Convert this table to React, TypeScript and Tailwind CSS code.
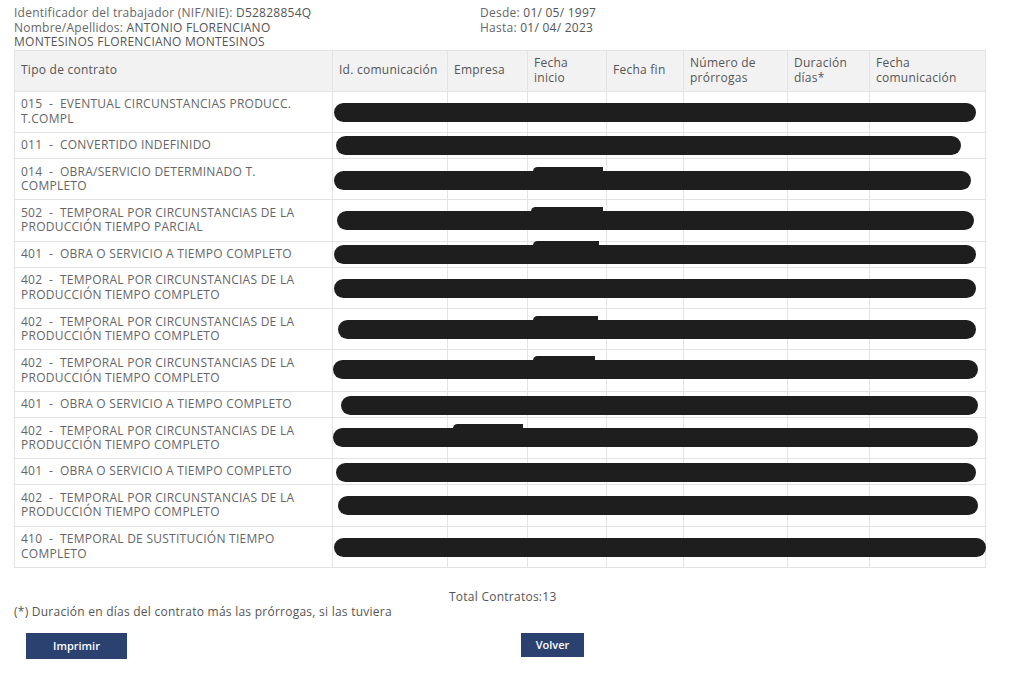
import React from 'react';

interface Contrato {
  tipo: string[];
  bar: [number, number, number];
  bump?: [number, number];
}

// bar: [left, right, offsetY] in px relative to the Id. comunicación cell (x=332)
const contratos: Contrato[] = [
  { tipo: ['015  -  EVENTUAL CIRCUNSTANCIAS PRODUCC.', 'T.COMPL'], bar: [1, 643, 0] },
  { tipo: ['011  -  CONVERTIDO INDEFINIDO'], bar: [3, 628, 0] },
  { tipo: ['014  -  OBRA/SERVICIO DETERMINADO T.', 'COMPLETO'], bar: [1, 638, 1], bump: [200, 270] },
  { tipo: ['502  -  TEMPORAL POR CIRCUNSTANCIAS DE LA', 'PRODUCCIÓN TIEMPO PARCIAL'], bar: [4, 641, 0], bump: [198, 270] },
  { tipo: ['401  -  OBRA O SERVICIO A TIEMPO COMPLETO'], bar: [1, 643, 0], bump: [200, 266] },
  { tipo: ['402  -  TEMPORAL POR CIRCUNSTANCIAS DE LA', 'PRODUCCIÓN TIEMPO COMPLETO'], bar: [1, 643, 0] },
  { tipo: ['402  -  TEMPORAL POR CIRCUNSTANCIAS DE LA', 'PRODUCCIÓN TIEMPO COMPLETO'], bar: [5, 643, 0], bump: [200, 265] },
  { tipo: ['402  -  TEMPORAL POR CIRCUNSTANCIAS DE LA', 'PRODUCCIÓN TIEMPO COMPLETO'], bar: [0, 645, -2], bump: [200, 262] },
  { tipo: ['401  -  OBRA O SERVICIO A TIEMPO COMPLETO'], bar: [8, 645, 1] },
  { tipo: ['402  -  TEMPORAL POR CIRCUNSTANCIAS DE LA', 'PRODUCCIÓN TIEMPO COMPLETO'], bar: [0, 645, -1], bump: [120, 190] },
  { tipo: ['401  -  OBRA O SERVICIO A TIEMPO COMPLETO'], bar: [3, 643, 0] },
  { tipo: ['402  -  TEMPORAL POR CIRCUNSTANCIAS DE LA', 'PRODUCCIÓN TIEMPO COMPLETO'], bar: [5, 645, 0] },
  { tipo: ['410  -  TEMPORAL DE SUSTITUCIÓN TIEMPO', 'COMPLETO'], bar: [1, 653, 0] },
];

const columnas = [
  { label: ['Tipo de contrato'], w: 'w-[318px]' },
  { label: ['Id. comunicación'], w: 'w-[115px]' },
  { label: ['Empresa'], w: 'w-[80px]' },
  { label: ['Fecha', 'inicio'], w: 'w-[79px]' },
  { label: ['Fecha fin'], w: 'w-[77px]' },
  { label: ['Número de', 'prórrogas'], w: 'w-[104px]' },
  { label: ['Duración', 'días*'], w: 'w-[82px]' },
  { label: ['Fecha', 'comunicación'], w: 'w-[116px]' },
];

const Redaction: React.FC<{ c: Contrato }> = ({ c }) => {
  const [l, r, dy] = c.bar;
  return (
    <>
      {c.bump && (
        <div
          className="absolute h-[9px] rounded-l-full rounded-r-[6px] bg-[#1e1e1e]"
          style={{ left: c.bump[0], width: c.bump[1] - c.bump[0], top: `calc(50% - 13px + ${dy}px)` }}
        />
      )}
      <div
        className="absolute h-[19px] rounded-full bg-[#1e1e1e]"
        style={{ left: l, width: r - l, top: `calc(50% - 9px + ${dy}px)` }}
      />
    </>
  );
};

export default function App() {
  return (
    <div className="w-[1024px] h-[676px] bg-white font-['Open_Sans',sans-serif] text-[12px] leading-[14.5px] tracking-[0.25px] text-[#666]">
      <div className="px-[14px] pt-[6px] flex">
        <div className="w-[466px]">
          <p>Identificador del trabajador (NIF/NIE): <span className="text-[#555]">D52828854Q</span></p>
          <p>Nombre/Apellidos: <span className="text-[#555]">ANTONIO FLORENCIANO</span></p>
          <p className="text-[#555]">MONTESINOS FLORENCIANO MONTESINOS</p>
        </div>
        <div>
          <p>Desde: <span className="text-[#555]">01/ 05/ 1997</span></p>
          <p>Hasta: <span className="text-[#555]">01/ 04/ 2023</span></p>
        </div>
      </div>

      <table className="ml-[14px] border-collapse table-fixed w-[971px]">
        <thead>
          <tr className="h-[41px] bg-[#f2f2f2]">
            {columnas.map((col, i) => (
              <th key={i} className={`${col.w} border border-[#e3e3e3] px-[6px] text-left font-normal text-[#555] align-middle`}>
                {col.label.map((t, j) => (
                  <div key={j}>{t}</div>
                ))}
              </th>
            ))}
          </tr>
        </thead>
        <tbody>
          {contratos.map((c, i) => (
            <tr key={i} className={c.tipo.length > 1 ? 'h-[41.4px]' : 'h-[26px]'}>
              <td className="border border-[#e3e3e3] px-[6px] align-middle whitespace-pre">
                {c.tipo.map((t, j) => (
                  <div key={j}>{t}</div>
                ))}
              </td>
              <td className="relative border border-[#e3e3e3]">
                <Redaction c={c} />
              </td>
              <td className="border border-[#e3e3e3]" />
              <td className="border border-[#e3e3e3]" />
              <td className="border border-[#e3e3e3]" />
              <td className="border border-[#e3e3e3]" />
              <td className="border border-[#e3e3e3]" />
              <td className="border border-[#e3e3e3]" />
            </tr>
          ))}
        </tbody>
      </table>

      <div className="mt-[22px] pl-[449px] text-[#555]">Total Contratos:13</div>
      <div className="pl-[14px] text-[#555]">(*) Duración en días del contrato más las prórrogas, si las tuviera</div>

      <div className="mt-[14px] flex items-start">
        <button className="ml-[26px] w-[101px] h-[26px] bg-[#2b4170] text-white text-[11px] font-semibold tracking-normal">
          Imprimir
        </button>
        <button className="ml-[394px] w-[63px] h-[24px] bg-[#2b4170] text-white text-[11px] font-semibold tracking-normal">
          Volver
        </button>
      </div>
    </div>
  );
}
